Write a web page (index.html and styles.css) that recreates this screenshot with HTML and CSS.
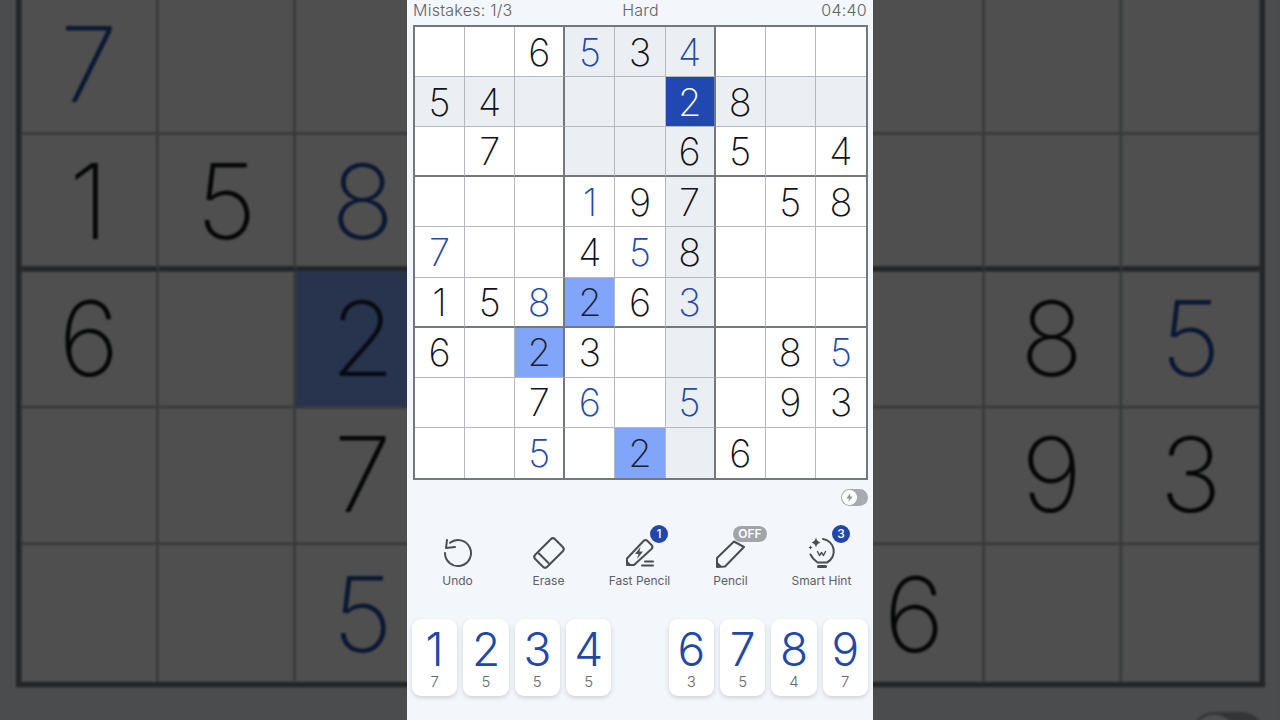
FILE: index.html
```html
<!DOCTYPE html>
<html lang="en">
	<head>
		<meta charset="utf-8">
		<title>Sudoku</title>
		<link rel="stylesheet" href="styles.css">
	</head>
	<body>
		<!-- blurred, zoomed copy of the game behind the phone column -->
		<div class="backdrop-clip">
			<div class="backdrop">
				<div class="board">
					<div class="cell"></div><div class="cell"></div><div class="cell">6</div><div class="cell hl blue">5</div><div class="cell hl">3</div><div class="cell hl blue">4</div><div class="cell"></div><div class="cell"></div><div class="cell"></div>
					<div class="cell hl">5</div><div class="cell hl">4</div><div class="cell hl"></div><div class="cell hl"></div><div class="cell hl"></div><div class="cell picked">2</div><div class="cell hl">8</div><div class="cell hl"></div><div class="cell hl"></div>
					<div class="cell"></div><div class="cell">7</div><div class="cell"></div><div class="cell hl"></div><div class="cell hl"></div><div class="cell hl">6</div><div class="cell">5</div><div class="cell"></div><div class="cell">4</div>
					<div class="cell"></div><div class="cell"></div><div class="cell"></div><div class="cell blue">1</div><div class="cell">9</div><div class="cell hl">7</div><div class="cell"></div><div class="cell">5</div><div class="cell">8</div>
					<div class="cell blue">7</div><div class="cell"></div><div class="cell"></div><div class="cell">4</div><div class="cell blue">5</div><div class="cell hl">8</div><div class="cell"></div><div class="cell"></div><div class="cell"></div>
					<div class="cell">1</div><div class="cell">5</div><div class="cell blue">8</div><div class="cell same">2</div><div class="cell">6</div><div class="cell hl blue">3</div><div class="cell"></div><div class="cell"></div><div class="cell"></div>
					<div class="cell">6</div><div class="cell"></div><div class="cell same">2</div><div class="cell">3</div><div class="cell"></div><div class="cell hl"></div><div class="cell"></div><div class="cell">8</div><div class="cell blue">5</div>
					<div class="cell"></div><div class="cell"></div><div class="cell">7</div><div class="cell blue">6</div><div class="cell"></div><div class="cell hl blue">5</div><div class="cell"></div><div class="cell">9</div><div class="cell">3</div>
					<div class="cell"></div><div class="cell"></div><div class="cell blue">5</div><div class="cell"></div><div class="cell same">2</div><div class="cell hl"></div><div class="cell">6</div><div class="cell"></div><div class="cell"></div>
				</div>
				<div class="switch-row"><div class="switch"><span class="knob"></span></div></div>
			</div>
		</div>

		<div class="app">
			<div class="status">
				<span>Mistakes: 1/3</span>
				<span class="level">Hard</span>
				<span class="clock">04:40</span>
			</div>

			<div class="board">
				<div class="cell"></div><div class="cell"></div><div class="cell">6</div><div class="cell hl blue">5</div><div class="cell hl">3</div><div class="cell hl blue">4</div><div class="cell"></div><div class="cell"></div><div class="cell"></div>
				<div class="cell hl">5</div><div class="cell hl">4</div><div class="cell hl"></div><div class="cell hl"></div><div class="cell hl"></div><div class="cell picked">2</div><div class="cell hl">8</div><div class="cell hl"></div><div class="cell hl"></div>
				<div class="cell"></div><div class="cell">7</div><div class="cell"></div><div class="cell hl"></div><div class="cell hl"></div><div class="cell hl">6</div><div class="cell">5</div><div class="cell"></div><div class="cell">4</div>
				<div class="cell"></div><div class="cell"></div><div class="cell"></div><div class="cell blue">1</div><div class="cell">9</div><div class="cell hl">7</div><div class="cell"></div><div class="cell">5</div><div class="cell">8</div>
				<div class="cell blue">7</div><div class="cell"></div><div class="cell"></div><div class="cell">4</div><div class="cell blue">5</div><div class="cell hl">8</div><div class="cell"></div><div class="cell"></div><div class="cell"></div>
				<div class="cell">1</div><div class="cell">5</div><div class="cell blue">8</div><div class="cell same">2</div><div class="cell">6</div><div class="cell hl blue">3</div><div class="cell"></div><div class="cell"></div><div class="cell"></div>
				<div class="cell">6</div><div class="cell"></div><div class="cell same">2</div><div class="cell">3</div><div class="cell"></div><div class="cell hl"></div><div class="cell"></div><div class="cell">8</div><div class="cell blue">5</div>
				<div class="cell"></div><div class="cell"></div><div class="cell">7</div><div class="cell blue">6</div><div class="cell"></div><div class="cell hl blue">5</div><div class="cell"></div><div class="cell">9</div><div class="cell">3</div>
				<div class="cell"></div><div class="cell"></div><div class="cell blue">5</div><div class="cell"></div><div class="cell same">2</div><div class="cell hl"></div><div class="cell">6</div><div class="cell"></div><div class="cell"></div>
			</div>

			<div class="switch-row">
				<div class="switch">
					<span class="knob">
						<svg viewBox="0 0 12 12" width="11" height="11"><path d="M7 1 2.5 7H5.5L4.8 11 9.5 5H6.5Z" fill="#8e9196"/></svg>
					</span>
				</div>
			</div>

			<div class="tools">
				<div class="tool">
					<svg class="icon" viewBox="0 0 32 32">
						<path d="M8 5.8A13 13 0 1 1 3 16"/>
						<path d="M5 3 4 11 13 10"/>
					</svg>
					<span>Undo</span>
				</div>
				<div class="tool">
					<svg class="icon" viewBox="0 0 32 32">
						<rect x="7.5" y="2" width="17" height="28" rx="3" transform="rotate(45 16 16)"/>
						<path d="M6 16.5 15.5 26"/>
					</svg>
					<span>Erase</span>
				</div>
				<div class="tool">
					<svg class="icon" viewBox="0 0 32 32">
						<path d="M3 28V21.5L19.5 4Q21.5 2 23.5 4L27.5 8Q29.5 10 27.5 12L10 28Z"/>
						<path class="solid" d="M3 28V23.5L7.5 28Z"/>
						<path class="solid" d="M16.5 10 11 17H14.5L13 22 19 14.5H15.5Z"/>
						<path d="M21 24.5H29M18 28.5H29"/>
					</svg>
					<span>Fast Pencil</span>
					<b class="badge">1</b>
				</div>
				<div class="tool">
					<svg class="icon" viewBox="0 0 32 32">
						<path d="M2 30V21L19 4.5 29 10 10 29.5Z"/>
						<path class="solid" d="M2 30V24.5L7.5 30Z"/>
					</svg>
					<span>Pencil</span>
					<b class="badge off">OFF</b>
				</div>
				<div class="tool">
					<svg class="icon" viewBox="0 0 32 32">
						<path d="M17 2A12.5 12.5 0 0 1 21 25.5H11.5Q6.5 22 4.5 17.5"/>
						<path class="thick" d="M12.5 29.5H19.5"/>
						<path class="solid" d="M10 .5Q10.8 4.5 14.5 5.5 10.8 6.5 10 10.5 9.2 6.5 5.5 5.5 9.2 4.5 10 .5Z"/>
						<path class="solid" d="M4.5 8.5Q4.8 10 6.5 10.5 4.8 11 4.5 12.5 4.2 11 2.5 10.5 4.2 10 4.5 8.5Z"/>
						<path class="fine" d="M11.5 14.5 13.5 18.5 15.5 15.5 17.5 18.5 19.5 14.5"/>
					</svg>
					<span>Smart Hint</span>
					<b class="badge">3</b>
				</div>
			</div>

			<div class="numpad">
				<div class="key">1<small>7</small></div>
				<div class="key">2<small>5</small></div>
				<div class="key">3<small>5</small></div>
				<div class="key">4<small>5</small></div>
				<div class="key-gap"></div>
				<div class="key">6<small>3</small></div>
				<div class="key">7<small>5</small></div>
				<div class="key">8<small>4</small></div>
				<div class="key">9<small>7</small></div>
			</div>
		</div>
	</body>
</html>
```

FILE: styles.css
```css
* {
	box-sizing: border-box;
}
body {
	margin: 0;
	height: 720px;
	overflow: hidden;
	position: relative;
	background-color: #4a4b4c;
	font-family: "Inter", "Liberation Sans", sans-serif;
}

.backdrop-clip {
	position: absolute;
	top: 0;
	left: 0;
	width: 1280px;
	height: 720px;
	overflow: hidden;
}
.backdrop {
	position: absolute;
	top: 25px;
	left: 407px;
	width: 466px;
	padding: 0 5px 0 6px;
	transform-origin: 233.5px 335.5px;
	transform: scale(2.745, 2.735);
	filter: brightness(0.31) blur(0.3px);
	background-color: #f3f6fa;
}

.app {
	position: relative;
	width: 466px;
	height: 720px;
	margin: 0 auto;
	padding: 0 5px 0 6px;
	background-color: #f3f6fa;
}

.status {
	display: grid;
	grid-template-columns: 1fr auto 1fr;
	height: 25px;
	font-size: 16px;
	font-weight: 300;
	letter-spacing: 0.25px;
	line-height: 20px;
	color: #5f6368;
}
.clock {
	padding-right: 1px;
	text-align: right;
}

.board {
	display: grid;
	grid-template-columns: repeat(9, 1fr);
	grid-template-rows: repeat(9, 1fr);
	width: 455px;
	height: 455px;
	background-color: #fff;
	border: 2px solid #74787e;
}
.cell {
	display: flex;
	align-items: center;
	justify-content: center;
	min-width: 0;
	min-height: 0;
	font-size: 38px;
	font-weight: 250;
	line-height: 1;
	color: #111316;
	border-right: 1px solid #b5b9bf;
	border-bottom: 1px solid #b5b9bf;
}
.cell:nth-child(3n) {
	border-right: 2px solid #74787e;
}
.cell:nth-child(9n) {
	border-right: 0;
}
.cell:nth-child(n+19):nth-child(-n+27),
.cell:nth-child(n+46):nth-child(-n+54) {
	border-bottom: 2px solid #74787e;
}
.cell:nth-child(n+73) {
	border-bottom: 0;
}
.hl {
	background-color: #ebeef3;
}
.blue {
	color: #234aa6;
}
.same {
	background-color: #81a5f8;
	color: #17203a;
}
.picked {
	background-color: #2148b1;
	color: #fff;
}

.switch-row {
	display: flex;
	justify-content: flex-end;
	padding-top: 9px;
}
.switch {
	width: 27px;
	height: 17px;
	padding: 1px;
	border-radius: 9px;
	background-color: #a7aaaf;
}
.knob {
	display: flex;
	align-items: center;
	justify-content: center;
	width: 15px;
	height: 15px;
	border-radius: 50%;
	background-color: #fff;
}

.tools {
	display: grid;
	grid-template-columns: repeat(5, 91px);
	margin-left: -1px;
	padding-top: 31px;
}
.tool {
	position: relative;
	display: flex;
	flex-direction: column;
	align-items: center;
	font-size: 12px;
	line-height: 16px;
	color: #5c6065;
}
.icon {
	width: 32px;
	height: 32px;
	margin-bottom: 4px;
	overflow: visible;
	fill: none;
	stroke: #4a4d52;
	stroke-width: 2;
	stroke-linejoin: round;
	stroke-linecap: round;
}
.icon .solid {
	fill: #4a4d52;
	stroke: none;
}
.icon .thick {
	stroke-width: 3;
}
.icon .fine {
	stroke-width: 1.4;
}
.badge {
	position: absolute;
	top: -12px;
	left: 56px;
	width: 18px;
	height: 18px;
	border-radius: 50%;
	background-color: #2148a8;
	color: #fff;
	font-size: 12px;
	font-weight: 500;
	line-height: 18px;
	text-align: center;
}
.badge.off {
	top: -11px;
	left: 48px;
	width: 34px;
	height: 16px;
	border-radius: 8px;
	background-color: #a1a4a9;
	line-height: 16px;
	font-weight: 600;
}

.numpad {
	display: grid;
	grid-template-columns: repeat(9, 1fr);
	column-gap: 6px;
	width: 456px;
	margin-top: 30px;
	margin-left: -1px;
}
.key {
	display: flex;
	flex-direction: column;
	align-items: center;
	height: 77px;
	padding-top: 6px;
	border-radius: 9px;
	background-color: #fff;
	box-shadow: 0 2px 4px rgba(60, 70, 90, 0.2);
	color: #2148a8;
	font-size: 46px;
	font-weight: 350;
	line-height: 48px;
}
.key small {
	font-size: 15px;
	font-weight: 300;
	line-height: 18px;
	color: #66696d;
}
```
